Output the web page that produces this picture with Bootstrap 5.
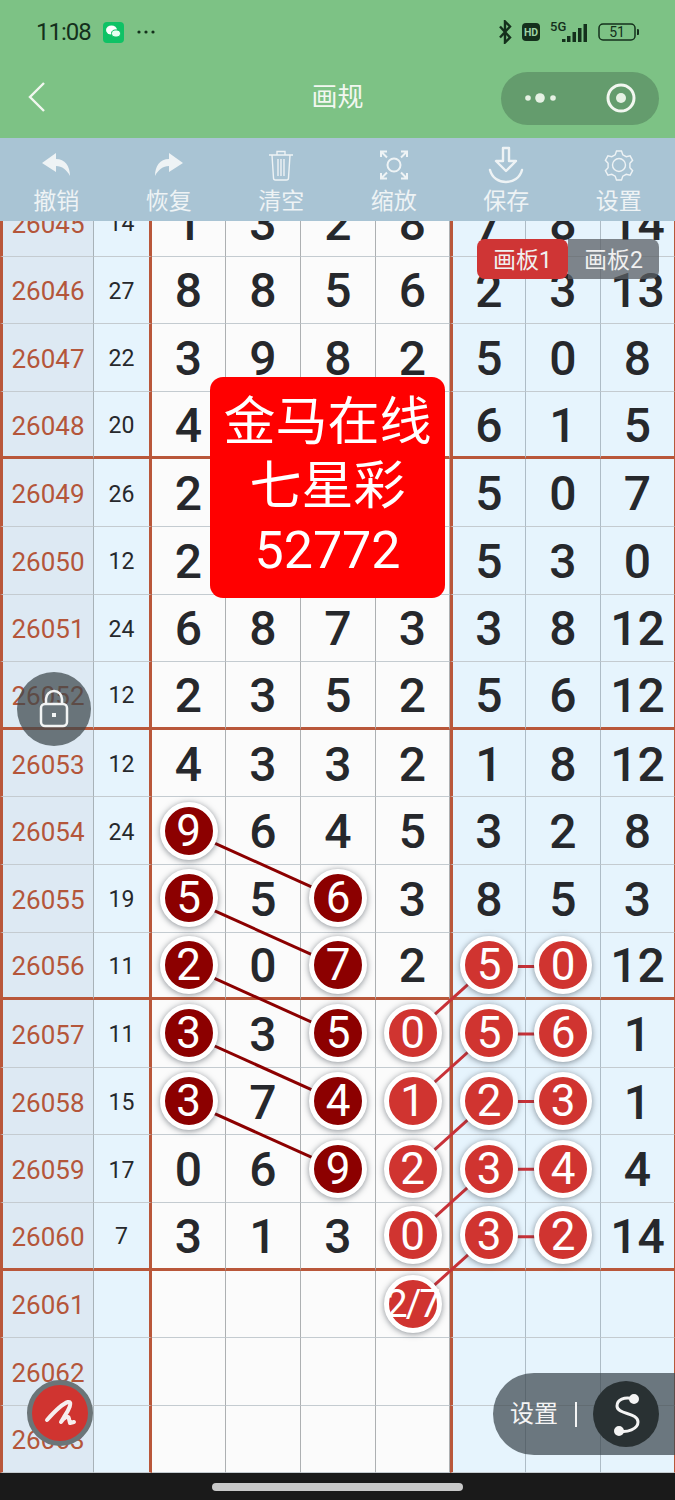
<!DOCTYPE html>
<html lang="zh-CN">
<head>
  <meta charset="UTF-8" />
  <meta name="viewport" content="width=device-width, initial-scale=1" />
  <title>画规</title>
  <link href="https://cdn.jsdelivr.net/npm/bootstrap@5.3.3/dist/css/bootstrap.min.css" rel="stylesheet">
  <style>
    body {
      font-family: Roboto, "Noto Sans CJK SC", sans-serif;
      background-color: #1a1a1a;
      overflow: hidden;
    }

    .app-wrap { width: 675px; height: 1500px; position: relative; overflow: hidden; }

    /* top bars */
    .top-green { background-color: #7dc285; height: 138px; }
    .status-line { height: 64px; padding: 0 36px; color: #14301c; }
    .status-time { font-size: 24px; line-height: 1; letter-spacing: -1px; }
    .status-icons { gap: 10px; }
    .title-line { height: 74px; padding: 0 16px 0 28px; position: relative; }
    .back-arrow { margin-top: -8px; }
    .page-title { font-size: 26px; color: #f2f7f0; position: absolute; left: 0; right: 0; text-align: center; line-height: 1; top: 20px; }
    .capsule { width: 158px; height: 53px; margin-top: -6px; border-radius: 27px; background-color: #649c6d; padding: 0 23px; z-index: 1; }
    .tool-bar { background-color: #a9c4d4; height: 83px; padding: 8px 0 0; }
    .tool-item { width: 112.5px; color: #eef3f5; font-size: 23px; line-height: 1; }
    .tool-item svg { display: block; height: 38px; margin-bottom: 6px; }

    /* sheet */
    .sheet-clip { height: 1252px; overflow: hidden; position: relative; background-color: #fbfbfb; }
    .sheet { display: grid; grid-template-columns: 94px 58px 74px 75px 75px 74px 76px 75px 74px; grid-auto-rows: 67.6px; margin-top: -32px; position: relative; }
    .cell { display: flex; align-items: center; justify-content: center; padding-top: 3px; border-right: 1px solid #adb0b2; border-bottom: 1px solid #c4cbd0; color: #26282c; font-size: 48px; font-weight: 500; line-height: 1; background-color: #fbfbfb; }
    .cell-id { background-color: #dde9f3; color: #b4563a; font-size: 26px; font-weight: 400; border-left: 3px solid #b9573a; border-right-color: #a8b2b8; }
    .cell-sum { background-color: #e6f4fd; color: #26282c; font-size: 23px; font-weight: 400; border-right: 3px solid #b9573a; }
    .cell-blue { background-color: #e6f4fd; border-right-color: #aebcc6; }
    .cell-split { border-left: 3px solid #b9573a; }
    .cell-end { border-right: 1px solid #b9573a; }
    .cell-sec { border-bottom: 3px solid #b9573a; }

    .ball { width: 58px; height: 58px; margin-top: -3px; border-radius: 50%; border: 5px solid #fff; display: flex; align-items: center; justify-content: center; font-size: 44px; font-weight: 400; color: #fff; box-shadow: 0 1px 6px rgba(40,50,60,.55); position: relative; z-index: 2; }
    .ball-dark { background-color: #8c0000; }
    .ball-red { background-color: #d03430; }
    .ball-frac { font-size: 38px; letter-spacing: -2px; }
    .link-lines { position: absolute; left: 0; top: 0; width: 675px; height: 1500px; z-index: 1; }

    /* floating things */
    .board-tabs { position: absolute; left: 477px; top: 239px; height: 40px; font-size: 23px; color: #f0f0f0; line-height: 1; }
    .board-tab { width: 91px; padding-top: 3px; display: flex; align-items: center; justify-content: center; }
    .board-on { background-color: #cf3535; border-radius: 8px; }
    .board-off { background-color: rgba(90,95,100,.75); border-radius: 0 8px 8px 0; }
    .notice { position: absolute; left: 210px; top: 377px; width: 235px; height: 221px; background-color: #ff0000; border-radius: 13px; color: #fff; font-size: 52px; line-height: 64px; font-weight: 400; padding-top: 14px; z-index: 3; }
    .lock-btn { position: absolute; left: 17px; top: 672px; width: 74px; height: 74px; border-radius: 50%; background-color: rgba(60,70,75,.72); z-index: 3; }
    .pen-btn { position: absolute; left: 27px; top: 1380px; width: 66px; height: 66px; border-radius: 50%; background-color: #d03430; border: 5px solid #6b7578; z-index: 3; }
    .set-pill { position: absolute; left: 493px; top: 1373px; width: 182px; height: 82px; border-radius: 41px 0 0 41px; background-color: rgba(60,70,78,.72); color: #f4f4f4; font-size: 24px; padding-left: 17px; z-index: 3; }
    .set-sep { width: 2px; height: 25px; background-color: #f4f4f4; margin: 0 16px 0 17px; }
    .set-round { width: 66px; height: 66px; border-radius: 50%; background-color: #293133; }

    .home-bar { height: 27px; background-color: #1a1a1a; }
    .home-pill { width: 251px; height: 8px; border-radius: 4px; background-color: #c8c8c8; }
  </style>
</head>
<body>

<div class="app-wrap">

  <!-- status + title -->
  <div class="top-green">
    <div class="status-line d-flex align-items-center justify-content-between">
      <div class="d-flex align-items-center gap-2">
        <span class="status-time me-1">11:08</span>
        <svg width="21" height="21" viewBox="0 0 21 21"><rect width="21" height="21" rx="4" fill="#0fc265"/><ellipse cx="8.500" cy="8" rx="5.500" ry="4.500" fill="#fff"/><ellipse cx="13" cy="11.500" rx="4.500" ry="3.600" fill="#e8fff1" stroke="#0fc265"/></svg>
        <svg class="ms-1" width="20" height="6" viewBox="0 0 20 6" fill="#14301c"><circle cx="3" cy="3" r="1.600"/><circle cx="10" cy="3" r="1.600"/><circle cx="17" cy="3" r="1.600"/></svg>
      </div>
      <div class="status-icons d-flex align-items-center">
        <svg width="13" height="24" viewBox="0 0 13 24" fill="none" stroke="#14301c" stroke-width="2.400"><path d="M1 6.500l10 11-5 5V1.500l5 5-10 11"/></svg>
        <svg width="18" height="18" viewBox="0 0 18 18"><rect width="18" height="18" rx="4" fill="#14301c"/><text x="9" y="13" text-anchor="middle" font-family="Roboto, sans-serif" font-weight="700" font-size="10.500" fill="#9fd3a6">HD</text></svg>
        <svg width="38" height="22" viewBox="0 0 38 22" fill="#14301c"><text x="0" y="10" font-family="Roboto, sans-serif" font-weight="500" font-size="13">5G</text><rect x="12" y="18" width="3.500" height="3"/><rect x="17" y="15" width="3.500" height="6"/><rect x="22.500" y="11" width="3.500" height="10"/><rect x="28" y="7" width="3.500" height="14"/><rect x="33.500" y="3" width="3.500" height="18"/></svg>
        <svg width="41" height="18" viewBox="0 0 41 18"><rect x="1" y="1" width="36" height="16" rx="4" fill="none" stroke="#14301c" stroke-width="1.500"/><path d="M39 6a3 3 0 0 1 0 6z" fill="#14301c"/><text x="19" y="14" text-anchor="middle" font-family="Roboto, sans-serif" font-size="14" fill="#14301c">51</text></svg>
      </div>
    </div>
    <div class="title-line d-flex align-items-center justify-content-between">
      <svg class="back-arrow" width="18" height="32" viewBox="0 0 18 32" fill="none" stroke="#f2f7f0" stroke-width="2.400"><path d="M16 2L2 16l14 14"/></svg>
      <div class="page-title">画规</div>
      <div class="capsule d-flex align-items-center justify-content-between">
        <svg width="34" height="12" viewBox="0 0 34 12" fill="#e6f1e4"><circle cx="4" cy="6" r="2.800"/><circle cx="16" cy="6" r="4.800"/><circle cx="29" cy="6" r="2.800"/></svg>
        <svg width="30" height="30" viewBox="0 0 30 30"><circle cx="15" cy="15" r="13" fill="none" stroke="#f2f7f0" stroke-width="3"/><circle cx="15" cy="15" r="5" fill="#e6f1e4"/></svg>
      </div>
    </div>
  </div>

  <!-- tools -->
  <div class="tool-bar d-flex">
    <div class="tool-item d-flex flex-column align-items-center">
      <svg width="38" height="38" viewBox="0 0 38 38" fill="#eef3f5"><path d="M19 7L5 17l14 9v-6c6 0 11 4 14 10 0-10-5-17-14-17z"/></svg>撤销
    </div>
    <div class="tool-item d-flex flex-column align-items-center">
      <svg width="38" height="38" viewBox="0 0 38 38" fill="#eef3f5"><path d="M19 7l14 10-14 9v-6c-6 0-11 4-14 10 0-10 5-17 14-17z"/></svg>恢复
    </div>
    <div class="tool-item d-flex flex-column align-items-center">
      <svg width="38" height="38" viewBox="0 0 38 38" fill="none" stroke="#eef3f5" stroke-width="1.400"><path d="M7 9h24M15 9V5.500h8V9M10 9l1.500 23a2 2 0 0 0 2 2h11a2 2 0 0 0 2-2L28 9M16 13v17M19 13v17M22 13v17"/></svg>清空
    </div>
    <div class="tool-item d-flex flex-column align-items-center">
      <svg width="38" height="38" viewBox="0 0 38 38" fill="none" stroke="#eef3f5" stroke-width="2"><circle cx="19" cy="19" r="6.500"/><path d="M6 11V5.500h6M26 5.500h6V11M32 27v5.500h-6M12 32.500H6V27M6 5.500l6 6M32 5.500l-6 6M32 32.500l-6-6M6 32.500l6-6"/></svg>缩放
    </div>
    <div class="tool-item d-flex flex-column align-items-center">
      <svg width="38" height="38" viewBox="0 0 38 38" fill="none" stroke="#eef3f5" stroke-width="2.400" stroke-linejoin="round"><path d="M16 2h6v13h7L19 25 9 15h7zM3 24c2 8 9 12 16 12s14-4 16-12" stroke-linecap="round"/></svg>保存
    </div>
    <div class="tool-item d-flex flex-column align-items-center">
      <svg width="38" height="38" viewBox="0 0 38 38" fill="none" stroke="#eef3f5" stroke-width="1.400"><circle cx="19" cy="19" r="6.500"/><path d="M16.500 5h5l1.300 3.800 3.400 1.900 3.900-.8 2.500 4.400-2.700 3v4.400l2.700 3-2.500 4.400-3.900-.8-3.400 1.900-1.300 3.800h-5l-1.300-3.800-3.400-1.900-3.900.8-2.500-4.400 2.700-3v-4.400l-2.700-3 2.500-4.400 3.900.8 3.400-1.900z"/></svg>设置
    </div>
  </div>

  <!-- sheet -->
  <div class="sheet-clip">
    <div class="sheet" id="sheet">
      <svg class="link-lines" viewBox="0 0 675 1500" id="lines"></svg>
    </div>
  </div>

  <div class="home-bar d-flex align-items-center justify-content-center">
    <div class="home-pill"></div>
  </div>

  <!-- floating -->
  <div class="board-tabs d-flex">
    <div class="board-tab board-on">画板1</div>
    <div class="board-tab board-off">画板2</div>
  </div>

  <div class="notice text-center">金马在线<br>七星彩<br>52772</div>

  <div class="lock-btn d-flex align-items-center justify-content-center">
    <svg width="30" height="40" viewBox="0 0 30 40" fill="none" stroke="#f2f4f4" stroke-width="2.500"><rect x="2" y="15" width="26" height="22" rx="4"/><path d="M7 15V10a8 8 0 0 1 16 0v5"/><rect x="13" y="24" width="4" height="4" fill="#f2f4f4" stroke="none"/></svg>
  </div>

  <div class="pen-btn d-flex align-items-center justify-content-center">
    <svg width="36" height="34" viewBox="0 0 36 34" fill="none" stroke="#f6eeee" stroke-width="4" stroke-linecap="round" stroke-linejoin="round"><path d="M5 24C12 16 20 8 26 6c5-1 1 8-4 15l-3 5c3-5 8-7 8-3l1 4 4-1"/></svg>
  </div>

  <div class="set-pill d-flex align-items-center">
    <span>设置</span>
    <div class="set-sep"></div>
    <div class="set-round d-flex align-items-center justify-content-center">
      <svg width="34" height="46" viewBox="0 0 34 46" fill="none" stroke="#f4f4f4" stroke-width="3"><path d="M25 8C15 5 8 9 8 15c0 9 21 6 21 16 0 7-11 11-19 9"/><circle cx="25" cy="8" r="3.500" fill="#f4f4f4"/><circle cx="10" cy="40" r="3.500" fill="#f4f4f4"/></svg>
    </div>
  </div>

</div>

<script>
  // d = dark ball, r = red ball
  const rows = [
    ["26045", "14", "1", "3", "2", "8", "7", "8", "14"],
    ["26046", "27", "8", "8", "5", "6", "2", "3", "13"],
    ["26047", "22", "3", "9", "8", "2", "5", "0", "8"],
    ["26048", "20", "4", "", "", "", "6", "1", "5"],
    ["26049", "26", "2", "", "", "", "5", "0", "7"],
    ["26050", "12", "2", "", "", "", "5", "3", "0"],
    ["26051", "24", "6", "8", "7", "3", "3", "8", "12"],
    ["26052", "12", "2", "3", "5", "2", "5", "6", "12"],
    ["26053", "12", "4", "3", "3", "2", "1", "8", "12"],
    ["26054", "24", "9d", "6", "4", "5", "3", "2", "8"],
    ["26055", "19", "5d", "5", "6d", "3", "8", "5", "3"],
    ["26056", "11", "2d", "0", "7d", "2", "5r", "0r", "12"],
    ["26057", "11", "3d", "3", "5d", "0r", "5r", "6r", "1"],
    ["26058", "15", "3d", "7", "4d", "1r", "2r", "3r", "1"],
    ["26059", "17", "0", "6", "9d", "2r", "3r", "4r", "4"],
    ["26060", "7", "3", "1", "3", "0r", "3r", "2r", "14"],
    ["26061", "", "", "", "", "2/7r", "", "", ""],
    ["26062", "", "", "", "", "", "", "", ""],
    ["26063", "", "", "", "", "", "", "", ""]
  ];

  const sheet = document.getElementById("sheet");
  const sectionEnd = ["26048", "26052", "26056", "26060"];

  rows.forEach(r => {
    r.forEach((val, i) => {
      const div = document.createElement("div");
      div.className = "cell";
      if (i === 0) div.classList.add("cell-id");
      if (i === 1) div.classList.add("cell-sum");
      if (i >= 6) div.classList.add("cell-blue");
      if (i === 6) div.classList.add("cell-split");
      if (i === 8) div.classList.add("cell-end");
      if (sectionEnd.includes(r[0])) div.classList.add("cell-sec");

      const last = val.slice(-1);
      if (i >= 2 && (last === "d" || last === "r")) {
        const ball = document.createElement("div");
        ball.className = "ball " + (last === "d" ? "ball-dark" : "ball-red");
        const txt = val.slice(0, -1);
        if (txt.length > 1) ball.classList.add("ball-frac");
        ball.textContent = txt;
        div.appendChild(ball);
      } else {
        div.textContent = val;
      }
      sheet.appendChild(div);
    });
  });

  // connecting lines, in sheet coordinates
  const rowY = n => 67.6 * (n - 26045) + 33.8;
  const lines = document.getElementById("lines");
  let out = "";
  const seg = (x1, n1, x2, n2, color) => {
    out += `<line x1="${x1}" y1="${rowY(n1)}" x2="${x2}" y2="${rowY(n2)}" stroke="${color}" stroke-width="3"/>`;
  };
  [26054, 26055, 26056, 26057, 26058].forEach(n => seg(188, n, 338, n + 1, "#8c0000"));
  [26056, 26057, 26058, 26059, 26060].forEach(n => {
    seg(488, n, 413, n + 1, "#c83238");
    seg(488, n, 563, n, "#c83238");
  });
  lines.innerHTML = out;
</script>

<script src="https://cdn.jsdelivr.net/npm/bootstrap@5.3.3/dist/js/bootstrap.bundle.min.js"></script>
</body>
</html>
